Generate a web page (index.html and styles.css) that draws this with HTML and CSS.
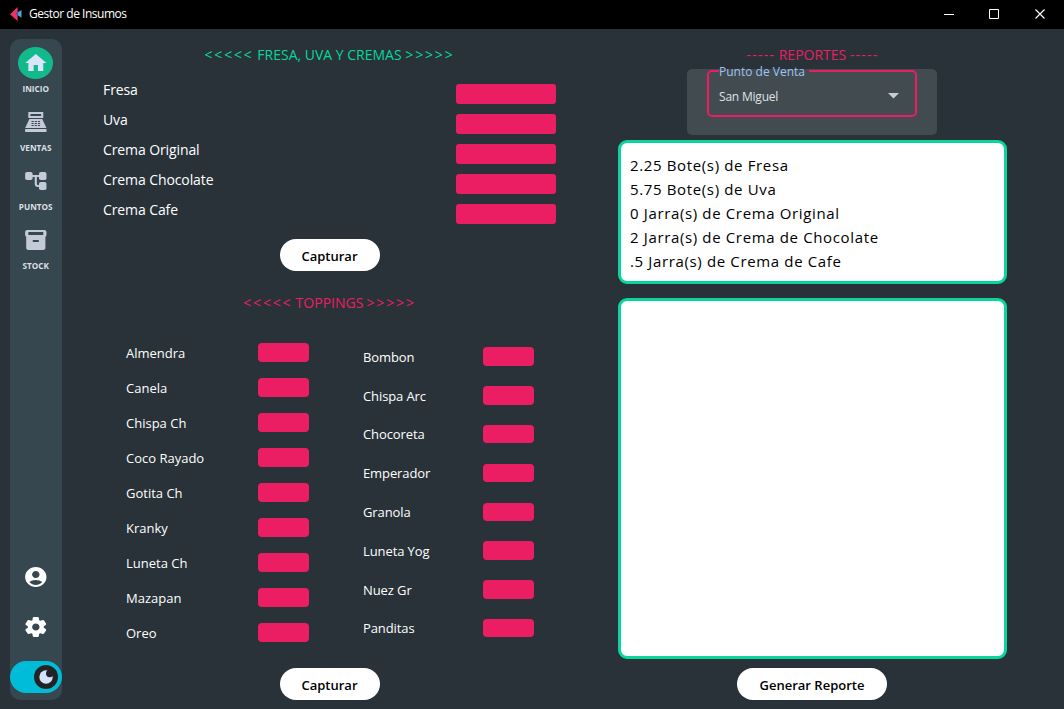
FILE: index.html
```html
<!DOCTYPE html>
<html lang="es">
<head>
<meta charset="utf-8">
<title>Gestor de Insumos</title>
<link rel="stylesheet" href="styles.css">
</head>
<body>
<header class="titlebar">
  <svg class="logo" width="12" height="14" viewBox="0 0 12 14"><path d="M0 7.2 7.6 0v14z" fill="#ee3167"/><path d="M5.6 6.8 11.5 2.9v7.8z" fill="#4aa8dd"/><path d="M5.6 6.8 7.6 5.5v2.7z" fill="#283593"/></svg>
  <span class="app-name">Gestor de Insumos</span>
  <svg class="controls" width="103" height="12" viewBox="0 0 103 12" fill="none" stroke="#fff"><path d="M0 6.5h10M45.500 1.500h9v9h-9z"/><path d="m91.500 1.500 9 9m0-9-9 9" stroke-width="1.200"/></svg>
</header>
<main class="app">
  <nav class="rail">
    <a class="item active"><span class="bubble"><svg class="icon" viewBox="0 0 24 24" preserveAspectRatio="none"><path d="M10 20v-6h4v6h5v-8h3L12 3 2 12h3v8z"/></svg></span><span class="caption">INICIO</span></a>
    <a class="item"><span class="bubble"><svg class="icon" viewBox="0 0 24 24" preserveAspectRatio="none"><path fill-rule="evenodd" d="M5 2h14v6H5zM7 4v2h10V4zM2 19h20v3H2zM6 9h12l4 9H2zM8 11v1h2v-1zM11 11v1h2v-1zM14 11v1h2v-1zM8 13v1h2v-1zM11 13v1h2v-1zM14 13v1h2v-1zM8 15v1h2v-1zM11 15v1h2v-1zM14 15v1h2v-1z"/></svg></span><span class="caption">VENTAS</span></a>
    <a class="item"><span class="bubble"><svg class="icon" viewBox="0 0 24 24" preserveAspectRatio="none"><rect x="2" y="3" width="7" height="8" rx="1.800"/><rect x="15" y="3" width="7" height="8" rx="1.800"/><rect x="15" y="13" width="7" height="8" rx="1.800"/><path d="M8 7h8M12 7v8q0 2 2 2h2" fill="none" stroke="currentColor" stroke-width="2"/></svg></span><span class="caption">PUNTOS</span></a>
    <a class="item"><span class="bubble"><svg class="icon" viewBox="0 0 24 24" preserveAspectRatio="none"><path d="M20 2H4c-1 0-2 .9-2 2v3.010c0 .72.43 1.340 1 1.690V20c0 1.100 1.100 2 2 2h14c.9 0 2-.9 2-2V8.700c.57-.35 1-.97 1-1.690V4c0-1.100-1-2-2-2zm-6 12h-4c-.55 0-1-.45-1-1s.45-1 1-1h4c.55 0 1 .45 1 1s-.45 1-1 1zm5-7H5V4h14v3z"/></svg></span><span class="caption">STOCK</span></a>
    <div class="tools">
      <svg class="icon" viewBox="0 0 24 24" preserveAspectRatio="none"><path d="M12 2C6.480 2 2 6.480 2 12s4.480 10 10 10 10-4.480 10-10S17.520 2 12 2zm0 4c1.930 0 3.500 1.570 3.500 3.500S13.930 13 12 13s-3.500-1.570-3.500-3.500S10.070 6 12 6zm0 14c-2.030 0-4.430-.82-6.140-2.880C7.550 15.800 9.680 15 12 15s4.450.8 6.140 2.120C16.430 19.180 14.030 20 12 20z"/></svg>
      <svg class="icon" viewBox="0 0 24 24" preserveAspectRatio="none"><path d="M19.500 12c0-.23-.01-.45-.03-.68l1.860-1.410c.4-.3.51-.86.26-1.300l-1.870-3.230c-.25-.44-.79-.62-1.250-.42l-2.150.91c-.37-.26-.76-.49-1.170-.68l-.29-2.310c-.06-.5-.49-.88-.99-.88h-3.730c-.51 0-.94.38-1 .88l-.29 2.310c-.41.19-.8.42-1.170.68l-2.150-.91c-.46-.2-1-.02-1.250.42L2.410 8.620c-.25.44-.14.99.26 1.300l1.860 1.410c-.02.22-.03.44-.03.67s.01.45.03.68l-1.860 1.410c-.4.3-.51.86-.26 1.300l1.870 3.230c.25.44.79.62 1.250.42l2.150-.91c.37.26.76.49 1.170.68l.29 2.310c.06.5.49.88.99.88h3.730c.5 0 .93-.38.99-.88l.29-2.310c.41-.19.8-.42 1.170-.68l2.150.91c.46.2 1 .02 1.250-.42l1.870-3.230c.25-.44.14-.99-.26-1.300l-1.860-1.410c.03-.23.04-.45.04-.68zm-7.460 3.500c-1.930 0-3.500-1.570-3.500-3.500s1.570-3.500 3.500-3.500 3.500 1.570 3.500 3.500-1.570 3.500-3.500 3.500z"/></svg>
      <span class="toggle"><svg width="24" height="24" viewBox="0 0 24 24"><circle cx="12" cy="12" r="12" fill="#222325"/><circle cx="12" cy="12" r="6.700" fill="#d2e2ff"/><circle cx="15.700" cy="8.500" r="3.700" fill="#222325"/></svg></span>
    </div>
  </nav>

  <section class="capture">
    <h2 class="heading green"><span class="arrows">&lt;&lt;&lt;&lt;&lt;</span> FRESA, UVA Y CREMAS <span class="arrows">&gt;&gt;&gt;&gt;&gt;</span></h2>
    <div class="creams">
      <label class="cream">Fresa<i class="field"></i></label>
      <label class="cream">Uva<i class="field"></i></label>
      <label class="cream">Crema Original<i class="field"></i></label>
      <label class="cream">Crema Chocolate<i class="field"></i></label>
      <label class="cream">Crema Cafe<i class="field"></i></label>
    </div>
    <button class="btn">Capturar</button>
    <h2 class="heading pink toppings-title"><span class="arrows">&lt;&lt;&lt;&lt;&lt;</span> TOPPINGS <span class="arrows">&gt;&gt;&gt;&gt;&gt;</span></h2>
    <div class="toppings">
      <div class="list first">
        <label>Almendra<i class="field"></i></label>
        <label>Canela<i class="field"></i></label>
        <label>Chispa Ch<i class="field"></i></label>
        <label>Coco Rayado<i class="field"></i></label>
        <label>Gotita Ch<i class="field"></i></label>
        <label>Kranky<i class="field"></i></label>
        <label>Luneta Ch<i class="field"></i></label>
        <label>Mazapan<i class="field"></i></label>
        <label>Oreo<i class="field"></i></label>
      </div>
      <div class="list second">
        <label>Bombon<i class="field"></i></label>
        <label>Chispa Arc<i class="field"></i></label>
        <label>Chocoreta<i class="field"></i></label>
        <label>Emperador<i class="field"></i></label>
        <label>Granola<i class="field"></i></label>
        <label>Luneta Yog<i class="field"></i></label>
        <label>Nuez Gr<i class="field"></i></label>
        <label>Panditas<i class="field"></i></label>
      </div>
    </div>
    <button class="btn">Capturar</button>
  </section>

  <section class="reports">
    <h2 class="heading pink reports-title"><span class="dashes">-----</span> REPORTES <span class="dashes">-----</span></h2>
    <div class="picker">
      <fieldset class="select">
        <legend>Punto de Venta</legend>
        <span>San Miguel</span>
        <svg width="11" height="6" viewBox="0 0 11 6"><path d="M0 0h11L5.500 5.500z" fill="#c9cdd2"/></svg>
      </fieldset>
    </div>
    <div class="panel summary">
      <p>2.25 Bote(s) de Fresa</p>
      <p>5.75 Bote(s) de Uva</p>
      <p>0 Jarra(s) de Crema Original</p>
      <p>2 Jarra(s) de Crema de Chocolate</p>
      <p>.5 Jarra(s) de Crema de Cafe</p>
    </div>
    <div class="panel detail"></div>
    <button class="btn wide">Generar Reporte</button>
  </section>
</main>
</body>
</html>
```
FILE: styles.css
```css
* { box-sizing: border-box; }
body {
  margin: 0;
  width: 1064px;
  height: 709px;
  overflow: hidden;
  display: flex;
  flex-direction: column;
  background: #283238;
  color: #fff;
  font-family: "Open Sans", "Noto Sans", sans-serif;
}
h2, p { margin: 0; font-weight: 400; }

.titlebar {
  display: flex;
  align-items: center;
  height: 29px;
  padding: 0 17px 2px 10px;
  background: #000;
}
.app-name { margin-left: 7px; font-size: 12px; letter-spacing: -0.48px; }
.controls { margin-left: auto; }

.app { display: flex; flex: 1; min-height: 0; padding: 10px 57px 9px 10px; }

.rail {
  display: flex;
  flex-direction: column;
  align-items: center;
  width: 51.500px;
  margin-right: 0.500px;
  height: 661px;
  padding-top: 8px;
  border-radius: 10px;
  background: #37474f;
  color: #c5cad8;
}
.item { display: flex; flex-direction: column; align-items: center; height: 59px; }
.bubble { display: flex; align-items: center; justify-content: center; width: 35.400px; height: 32px; }
.active .bubble { background: #12b98b; color: #d8e5fb; border-radius: 50%; }
.icon { width: 25.6px; height: 24px; fill: currentColor; }
.caption { margin-top: 5px; font-size: 8.200px; line-height: 10px; font-weight: 700; color: #dcdfe5; }
.tools { display: flex; flex-direction: column; align-items: center; gap: 26px; margin-top: auto; padding-bottom: 7px; color: #fff; }
.toggle { display: flex; align-items: center; justify-content: flex-end; width: 51.500px; height: 32px; margin-top: -4px; padding-right: 4px; border-radius: 16px; background: #00bcd9; }

.heading { font-size: 14px; line-height: 20px; text-align: center; white-space: nowrap; font-weight: 400; }
.arrows { letter-spacing: 1.850px; }
.dashes { letter-spacing: 1.200px; }
.green { color: #08d69d; }
.pink { color: #ec1e63; }

.capture { display: flex; flex-direction: column; align-items: center; width: 453px; margin-left: 41px; padding-top: 6px; }
.creams { width: 100%; margin-top: 15px; }
.cream { display: flex; justify-content: space-between; height: 30px; font-size: 14px; line-height: 20px; letter-spacing: -0.100px; }
.field { flex: none; background: #ec1e63; border-radius: 4px; }
.cream .field { width: 100px; height: 20px; margin-top: 4px; border-radius: 3px; }

.btn {
  flex: none;
  width: 100px;
  height: 32px;
  padding: 2px 0 0;
  border: 0;
  border-radius: 16px;
  background: #fff;
  color: #000;
  font: 600 13px/20px "Open Sans", "Noto Sans", sans-serif;
}
.creams + .btn { margin-top: 9px; }
.toppings-title { margin-top: 22px; word-spacing: -0.500px; }
.toppings { display: flex; align-self: stretch; height: 317px; margin: 22px 22px 16px 23px; }
.list { display: flex; flex-direction: column; font-size: 13px; line-height: 18px; }
.list label { display: flex; align-items: center; justify-content: space-between; }
.list .field { width: 51px; height: 18.500px; margin-top: -0.500px; }
.first { width: 183px; }
.first label { height: 35px; }
.second { width: 171px; margin-left: 54px; padding-top: 2.500px; letter-spacing: -0.100px; }
.second label { height: 38.800px; }

.reports { display: flex; flex-direction: column; align-items: center; width: 389px; margin-left: 62px; padding-top: 6px; }
.picker { width: 250px; height: 66px; margin: 4px 1px 0 0; padding-left: 20px; border-radius: 5px; background: #424b4f; }
.select {
  position: relative;
  top: -6px;
  display: flex;
  align-items: center;
  justify-content: space-between;
  width: 210px;
  height: 54px;
  margin: 0;
  padding: 0 16px 2px 10px;
  border: 2px solid #ec1e63;
  border-radius: 5px;
  color: #dfe2e5;
  font-size: 12px;
}
.select span { letter-spacing: -0.200px; }
.select legend { padding: 2px 4px 0 0; line-height: 14px; color: #9fc3f5; }
.panel { width: 389px; border: 3px solid #08d69d; border-radius: 9px; background: #fff; color: #000; }
.summary { height: 144px; margin-top: 5px; padding: 10px 9px; font-size: 15px; line-height: 24px; letter-spacing: 0.640px; }
.detail { height: 360.500px; margin-top: 14.200px; }
.wide { width: 150px; margin: 9.300px 1px 0 0; }
```
